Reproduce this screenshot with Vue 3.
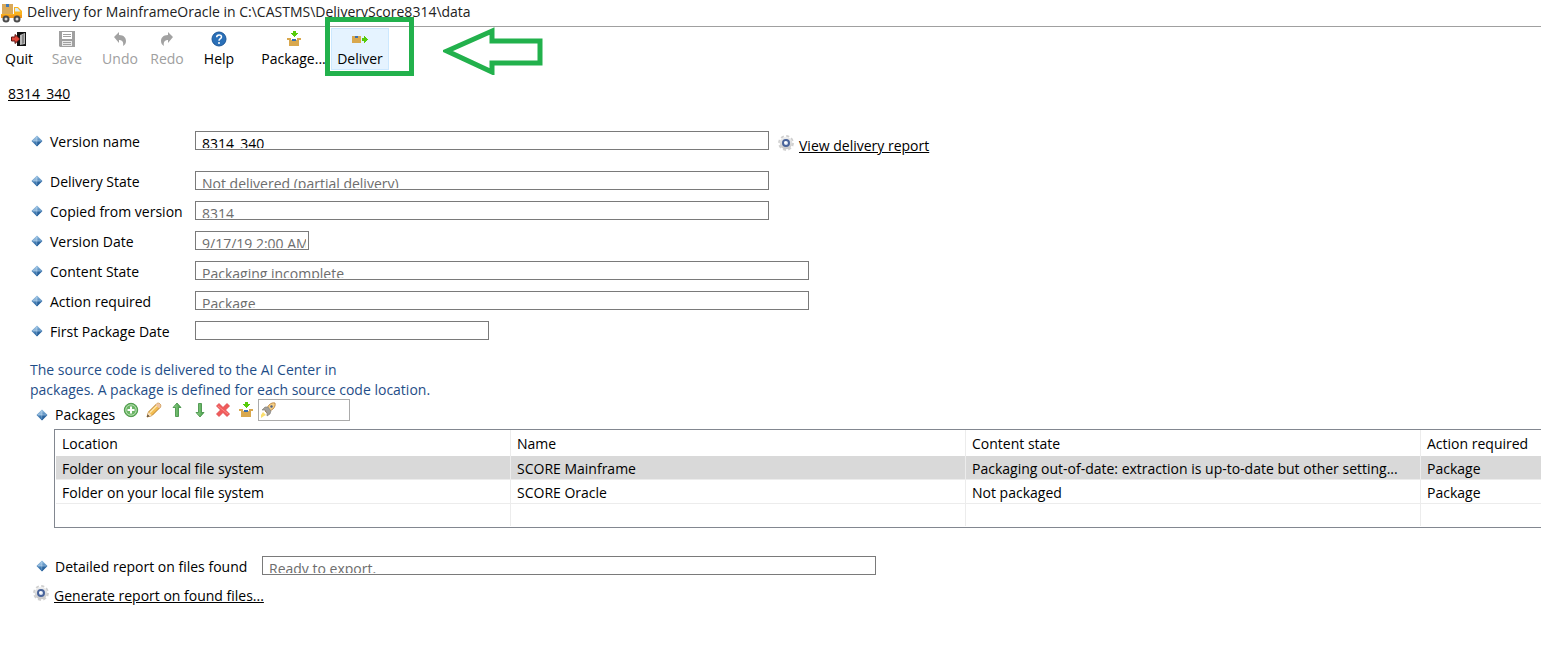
<script setup>
import { ref } from 'vue'

const tools = [
  { label: 'Quit', icon: 'quit' },
  { label: 'Save', icon: 'save', disabled: true },
  { label: 'Undo', icon: 'undo', disabled: true },
  { label: 'Redo', icon: 'redo', disabled: true },
  { label: 'Help', icon: 'help' },
  { label: 'Package...', icon: 'package' },
  { label: 'Deliver', icon: 'deliver', active: true }
]

const fields = ref([
  { id: 'version-name', label: 'Version name', value: '8314_340', size: 'wide', editable: true },
  { id: 'delivery-state', label: 'Delivery State', value: 'Not delivered (partial delivery)', size: 'wide' },
  { id: 'copied-from', label: 'Copied from version', value: '8314', size: 'wide' },
  { id: 'version-date', label: 'Version Date', value: '9/17/19 2:00 AM', size: 'date' },
  { id: 'content-state', label: 'Content State', value: 'Packaging incomplete', size: 'full' },
  { id: 'action-required', label: 'Action required', value: 'Package', size: 'full' },
  { id: 'first-package', label: 'First Package Date', value: '', size: 'half' }
])

const packageTools = [
  { label: 'Add', icon: 'add' },
  { label: 'Edit', icon: 'edit' },
  { label: 'Move up', icon: 'up' },
  { label: 'Move down', icon: 'down' },
  { label: 'Delete', icon: 'delete' },
  { label: 'Package', icon: 'package' }
]

const packages = [
  {
    location: 'Folder on your local file system',
    name: 'SCORE Mainframe',
    state: 'Packaging out-of-date: extraction is up-to-date but other setting...',
    action: 'Package',
    selected: true
  },
  { location: 'Folder on your local file system', name: 'SCORE Oracle', state: 'Not packaged', action: 'Package' }
]

const search = ref('')
const report = ref('Ready to export.')
</script>

<template>
  <div class="window">
    <svg class="defs" aria-hidden="true">
      <defs>
        <linearGradient id="g-blue" x1="0" y1="0" x2="0" y2="1">
          <stop offset="0" stop-color="#8fbbe0" /><stop offset="1" stop-color="#1a5a9a" />
        </linearGradient>
        <linearGradient id="g-green" x1="0" y1="0" x2="1" y2="0">
          <stop offset="0" stop-color="#9ad692" /><stop offset="1" stop-color="#3f9a42" />
        </linearGradient>
        <linearGradient id="g-gear" x1="0" y1="0" x2="0" y2="1">
          <stop offset="0" stop-color="#f1f1f1" /><stop offset="1" stop-color="#c6c6c6" />
        </linearGradient>
      </defs>
      <symbol id="truck" viewBox="0 0 22 20">
        <path d="M1 1h11v10H1z" fill="#d9a95a" /><path d="M5 1h3v3H5z" fill="#4179b5" />
        <path d="M0 11h13V4h4l4 4v7H0z" fill="#f9b21d" /><path d="M14 5h2.500l3 3.500H14z" fill="#d6edfa" />
        <path d="M0 12h21v3H0z" fill="#f29a1c" />
        <circle cx="5" cy="16" r="3.500" fill="#4b4b4b" /><circle cx="5" cy="16" r="1.500" fill="#d8d8d8" />
        <circle cx="16" cy="16" r="3.500" fill="#4b4b4b" /><circle cx="16" cy="16" r="1.500" fill="#d8d8d8" />
      </symbol>
      <symbol id="quit" viewBox="0 0 16 16">
        <path d="M6 1h9v14H6z" fill="#111" /><path d="M9 4l5-2v11l-5 1z" fill="#b9b9b9" />
        <path d="M11 4l2-1v9l-2 1z" fill="#858585" />
        <path d="M0.500 6H4V3.500L9 8l-5 4.500V10H.5z" fill="#e0483a" stroke="#5c1410" />
      </symbol>
      <symbol id="save" viewBox="0 0 16 16">
        <path d="M0 0h16v16H1l-1-1z" fill="#a0a0a0" /><path d="M3 1h10v7H3z" fill="#fff" />
        <path d="M4 3.500h8M4 5.500h8" stroke="#a0a0a0" /><path d="M3 10h10v5H3z" fill="#e9e9e9" />
        <path d="M4 11.500h8M4 13.500h8" stroke="#a0a0a0" />
      </symbol>
      <symbol id="undo" viewBox="0 0 16 16">
        <path d="M2 6l5-5v3c5 0 7 3 7 6 0 2-1 4-3 5 1-4-1-6-4-6v3z" fill="#a2a2a2" />
      </symbol>
      <symbol id="redo" viewBox="0 0 16 16">
        <path d="M14 6L9 1v3C4 4 2 7 2 10c0 2 1 4 3 5-1-4 1-6 4-6v3z" fill="#a2a2a2" />
      </symbol>
      <symbol id="help" viewBox="0 0 16 16">
        <circle cx="8" cy="8" r="7" fill="#2a70b8" stroke="#1b5697" />
        <path d="M5.700 6.300c0-3.200 4.800-3 4.800-.3C10.500 7.800 8 7.600 8 9.700M8 11v2" fill="none" stroke="#fff" stroke-width="1.500" />
      </symbol>
      <symbol id="package" viewBox="0 0 16 16">
        <path d="M1 7h4v2h6V7h4v2h-2v6H3V9H1z" fill="#d9a84e" /><path d="M6 8h4v2H6z" fill="#3a6fae" />
        <path d="M7 0h3v2h2v1h-1v1h-1v1H9v1H8V5H7V4H6V3H5V2h2z" fill="#57cc0a" />
      </symbol>
      <symbol id="deliver" viewBox="0 0 16 16">
        <path d="M0 5h9v7H0z" fill="#d9a84e" /><path d="M3 5h3v2H3z" fill="#3a6fae" />
        <path d="M10 7h2V5h1v1h1v1h1v1h1v1h-1v1h-1v1h-1v1h-1v-2h-2z" fill="#57cc0a" />
      </symbol>
      <symbol id="diamond" viewBox="0 0 12 12">
        <path d="M6 .5L11.500 6 6 11.500.5 6z" fill="url(#g-blue)" />
        <path d="M6 1v5H1z" fill="#b5d4ed" fill-opacity=".5" />
        <path d="M6 2v8M2 6h8" stroke="#d8ebfa" stroke-opacity=".4" />
        <path d="M6 6.500h5L6 11z" fill="#174f8b" fill-opacity=".5" />
      </symbol>
      <symbol id="gear" viewBox="0 0 16 16">
        <circle cx="8" cy="8" r="6.800" fill="none" stroke="#d0d0d0" stroke-width="2.200" stroke-dasharray="3 2.340" />
        <circle cx="8" cy="8" r="6.300" fill="url(#g-gear)" />
        <circle cx="8" cy="8" r="3" fill="#dfe9f6" stroke="#48639a" stroke-width="2" />
        <circle cx="7.500" cy="7.500" r="1.200" fill="#fff" />
      </symbol>
      <symbol id="add" viewBox="0 0 16 16">
        <circle cx="8" cy="8" r="6.700" fill="#6cb566" stroke="#4f9a4c" />
        <circle cx="8" cy="8" r="5.200" fill="none" stroke="#b4deb0" />
        <path d="M8 4.500v7M4.500 8h7" stroke="#fff" stroke-width="2" />
      </symbol>
      <symbol id="edit" viewBox="0 0 16 16">
        <path d="M1 15l1.500-5L11 1.500c2-1 4.500 1 3.500 3.500L6 13.500z" fill="#f3bd51" stroke="#b77b24" />
        <path d="M4 10.500L12 2.500" stroke="#fde7ae" stroke-width="1.500" />
        <path d="M11 1.500c2-1 4.500 1 3.500 3.500L13 6.300 9.700 3z" fill="#eec5a4" />
        <path d="M1 15l1.500-5L6 13.500z" fill="#f8dfb8" /><path d="M1 15l.7-2.500 1.800 1.800z" fill="#42352c" />
      </symbol>
      <symbol id="up" viewBox="0 0 16 16">
        <path d="M8 1l4 4.500H9.500v9h-3v-9H4z" fill="url(#g-green)" stroke="#3b8b3d" stroke-width=".8" />
      </symbol>
      <symbol id="down" viewBox="0 0 16 16">
        <path d="M8 15l4-4.500H9.500v-9h-3v9H4z" fill="url(#g-green)" stroke="#3b8b3d" stroke-width=".8" />
      </symbol>
      <symbol id="delete" viewBox="0 0 16 16">
        <path d="M1.500 4L4 1.500l4 4 4-4L14.500 4l-4 4 4 4-2.500 2.500-4-4-4 4L1.500 12l4-4z" fill="#f05a5a" stroke="#dc4447" stroke-width=".8" />
        <path d="M3 4l10 8" stroke="#ff8a86" />
      </symbol>
      <symbol id="rocket" viewBox="0 0 16 16">
        <path d="M5 9l4-6c2-2 4-2.500 6-2 .5 2 0 4-2 6l-6 4z" fill="#f6cf85" stroke="#b57b35" stroke-width=".8" />
        <path d="M2 8l3-3 3 0 3 4-1 3-3 2 0-3-2-3z" fill="#a3a09b" stroke="#7c7873" stroke-width=".6" />
        <circle cx="11.500" cy="4.500" r="1.200" fill="#4c5f85" />
        <path d="M3 10l3 3-2 1-3 2v-3z" fill="#fbdf6e" />
      </symbol>
    </svg>

    <header class="titlebar">
      <svg class="truck"><use href="#truck" /></svg>
      <span>Delivery for MainframeOracle in C:\CASTMS\DeliveryScore8314\data</span>
    </header>

    <nav class="toolbar" aria-label="Main">
      <button
        v-for="tool in tools"
        :key="tool.label"
        type="button"
        :class="['tool', tool.icon, { active: tool.active }]"
        :disabled="tool.disabled"
      >
        <svg class="icon"><use :href="'#' + tool.icon" /></svg>
        <span>{{ tool.label }}</span>
      </button>
      <div class="callout" aria-hidden="true">
        <div class="frame"></div>
        <svg class="arrow" viewBox="0 0 100 48">
          <path d="M4 24L49 4V14H97V36H49V45Z" fill="none" stroke="#22b14c" stroke-width="5" />
        </svg>
      </div>
    </nav>

    <main>
      <a class="crumb" href="#version">8314_340</a>

      <form class="form" @submit.prevent>
        <div v-for="field in fields" :key="field.id" :class="['row', { first: field.editable }]">
          <svg class="diamond"><use href="#diamond" /></svg>
          <label :for="field.id">{{ field.label }}</label>
          <div :class="['box', field.size]">
            <div class="clip">
              <input :id="field.id" v-model="field.value" type="text" :readonly="!field.editable" />
            </div>
          </div>
          <a v-if="field.editable" class="view" href="#report">
            <svg class="icon"><use href="#gear" /></svg>
            <span>View delivery report</span>
          </a>
        </div>
      </form>

      <p class="hint">
        The source code is delivered to the AI Center in<br />
        packages. A package is defined for each source code location.
      </p>

      <section class="packages">
        <div class="packages-bar">
          <svg class="diamond"><use href="#diamond" /></svg>
          <h2>Packages</h2>
          <div class="actions">
            <button v-for="tool in packageTools" :key="tool.icon" type="button" :aria-label="tool.label">
              <svg class="icon"><use :href="'#' + tool.icon" /></svg>
            </button>
            <label class="search">
              <svg class="icon"><use href="#rocket" /></svg>
              <input v-model="search" type="text" aria-label="Filter packages" />
            </label>
          </div>
        </div>

        <div class="table-wrap">
          <table>
            <colgroup><col class="c" /><col class="c" /><col class="c" /><col /></colgroup>
            <thead>
              <tr>
                <th scope="col">Location</th>
                <th scope="col">Name</th>
                <th scope="col">Content state</th>
                <th scope="col">Action required</th>
              </tr>
            </thead>
            <tbody>
              <tr v-for="item in packages" :key="item.name" :class="{ selected: item.selected }">
                <td>{{ item.location }}</td>
                <td>{{ item.name }}</td>
                <td>{{ item.state }}</td>
                <td>{{ item.action }}</td>
              </tr>
              <tr class="blank"><td></td><td></td><td></td><td></td></tr>
            </tbody>
          </table>
        </div>
      </section>

      <div class="row report">
        <svg class="diamond"><use href="#diamond" /></svg>
        <label for="files-report">Detailed report on files found</label>
        <div class="box full">
          <div class="clip"><input id="files-report" v-model="report" type="text" readonly /></div>
        </div>
      </div>
      <a class="generate" href="#generate">
        <svg class="icon"><use href="#gear" /></svg>
        <span>Generate report on found files...</span>
      </a>
    </main>
  </div>
</template>

<style>
body {
  margin: 0;
  background: #fff;
}
</style>

<style scoped>
.window,
.window button,
.window input {
  font-family: "Open Sans", "Noto Sans", sans-serif;
  font-size: 14px;
  line-height: 20px;
  color: #000;
}
.window {
  min-height: 100vh;
  overflow: hidden;
  white-space: nowrap;
}
.defs {
  position: absolute;
  width: 0;
  height: 0;
}
.icon {
  width: 16px;
  height: 16px;
  flex: none;
  display: block;
}
button {
  padding: 0;
  border: 0;
  background: none;
}
.titlebar {
  display: flex;
  align-items: center;
  gap: 4px;
  height: 26px;
  padding-left: 1px;
  border-bottom: 1px solid #a0a0a0;
}
.titlebar span {
  padding-bottom: 2px;
  color: #222;
}
.truck {
  width: 22px;
  height: 20px;
  flex: none;
}
.toolbar {
  display: grid;
  grid-template-columns: 38px 58px 48px 46px 58px 83px 58px 1fr;
  padding: 1px 0 12px 0;
}
.tool {
  display: flex;
  flex-direction: column;
  align-items: center;
  gap: 2px;
  box-sizing: border-box;
  height: 42px;
  padding-top: 3px;
}
.tool.package {
  padding-left: 8px;
}
.window .tool:disabled {
  color: #a0a0a0;
}
.tool.active {
  padding-top: 2px;
  border: 1px solid #cce8ff;
  background: #e5f3ff;
}
.callout {
  position: relative;
}
.frame {
  position: absolute;
  left: -64px;
  top: -11px;
  width: 79px;
  height: 49px;
  border: 5px solid #22b14c;
}
.arrow {
  position: absolute;
  left: 54px;
  top: -1px;
  width: 100px;
  height: 48px;
}
main {
  padding-top: 1px;
}
a {
  color: #000;
  text-underline-offset: 1px;
}
.crumb {
  display: block;
  width: max-content;
  margin: 1px 0 0 8px;
}
.form {
  margin-top: 22px;
}
.row {
  display: flex;
  align-items: flex-start;
  height: 30px;
  padding-left: 31px;
}
.row.first {
  margin-bottom: 10px;
}
.diamond {
  width: 12px;
  height: 12px;
  flex: none;
  margin-right: 7px;
}
.row .diamond {
  margin-top: 9px;
}
.row label {
  width: 145px;
  flex: none;
  padding-top: 6px;
}
.box {
  box-sizing: border-box;
  height: 19px;
  margin-top: 5px;
  border: 1px solid #7a7a7a;
  padding: 2px 2px 1px;
}
.clip {
  height: 14px;
  overflow: hidden;
}
.clip input {
  display: block;
  box-sizing: border-box;
  width: 100%;
  height: 20px;
  margin: 0;
  padding: 0 0 0 4px;
  border: 0;
  outline: 0;
  background: none;
}
.window .clip input:read-only {
  color: #6d6d6d;
}
.wide {
  width: 574px;
}
.full {
  width: 614px;
}
.half {
  width: 294px;
}
.date {
  width: 114px;
}
.view {
  display: flex;
  gap: 5px;
  margin: 9px 0 0 9px;
  text-decoration: none;
}
.view span,
.generate span {
  padding-top: 1px;
  text-decoration: underline;
}
.hint {
  margin: 14px 0 0 30px;
  color: #1f4e88;
}
.packages-bar {
  display: flex;
  align-items: center;
  height: 29px;
  padding-left: 36px;
}
h2 {
  width: 68px;
  margin: 0;
  font-size: 14px;
  font-weight: 400;
}
.actions {
  display: flex;
  align-items: center;
  gap: 7px;
  padding-bottom: 10px;
}
.search {
  display: flex;
  align-items: center;
  box-sizing: border-box;
  width: 92px;
  height: 22px;
  margin-left: -3px;
  border: 1px solid #ababab;
  padding-left: 1px;
}
.search input {
  min-width: 0;
  flex: 1;
  border: 0;
  padding: 0 2px;
  outline: 0;
  background: none;
}
.table-wrap {
  margin-left: 54px;
  border: 1px solid #828790;
  border-right: 0;
  padding-left: 1px;
}
table {
  width: 100%;
  table-layout: fixed;
  border-collapse: separate;
  border-spacing: 0;
}
.c {
  width: 455px;
}
th,
td {
  box-sizing: border-box;
  height: 24px;
  padding: 2px 0 0 6px;
  border-right: 1px solid #ececec;
  border-bottom: 1px solid #ececec;
  font-weight: 400;
  text-align: left;
  overflow: hidden;
}
th {
  height: 26px;
  border-bottom: 0;
}
th:last-child,
td:last-child {
  border-right: 0;
}
.selected td {
  background: #d9d9d9;
}
.blank td {
  height: 22px;
  border-bottom: 0;
}
.table-wrap {
  padding-bottom: 1px;
}
.report {
  margin-top: 23px;
  padding-left: 36px;
}
.row.report label {
  width: 207px;
}
.generate {
  display: flex;
  width: max-content;
  gap: 5px;
  margin: 4px 0 0 33px;
  text-decoration: none;
}
</style>
